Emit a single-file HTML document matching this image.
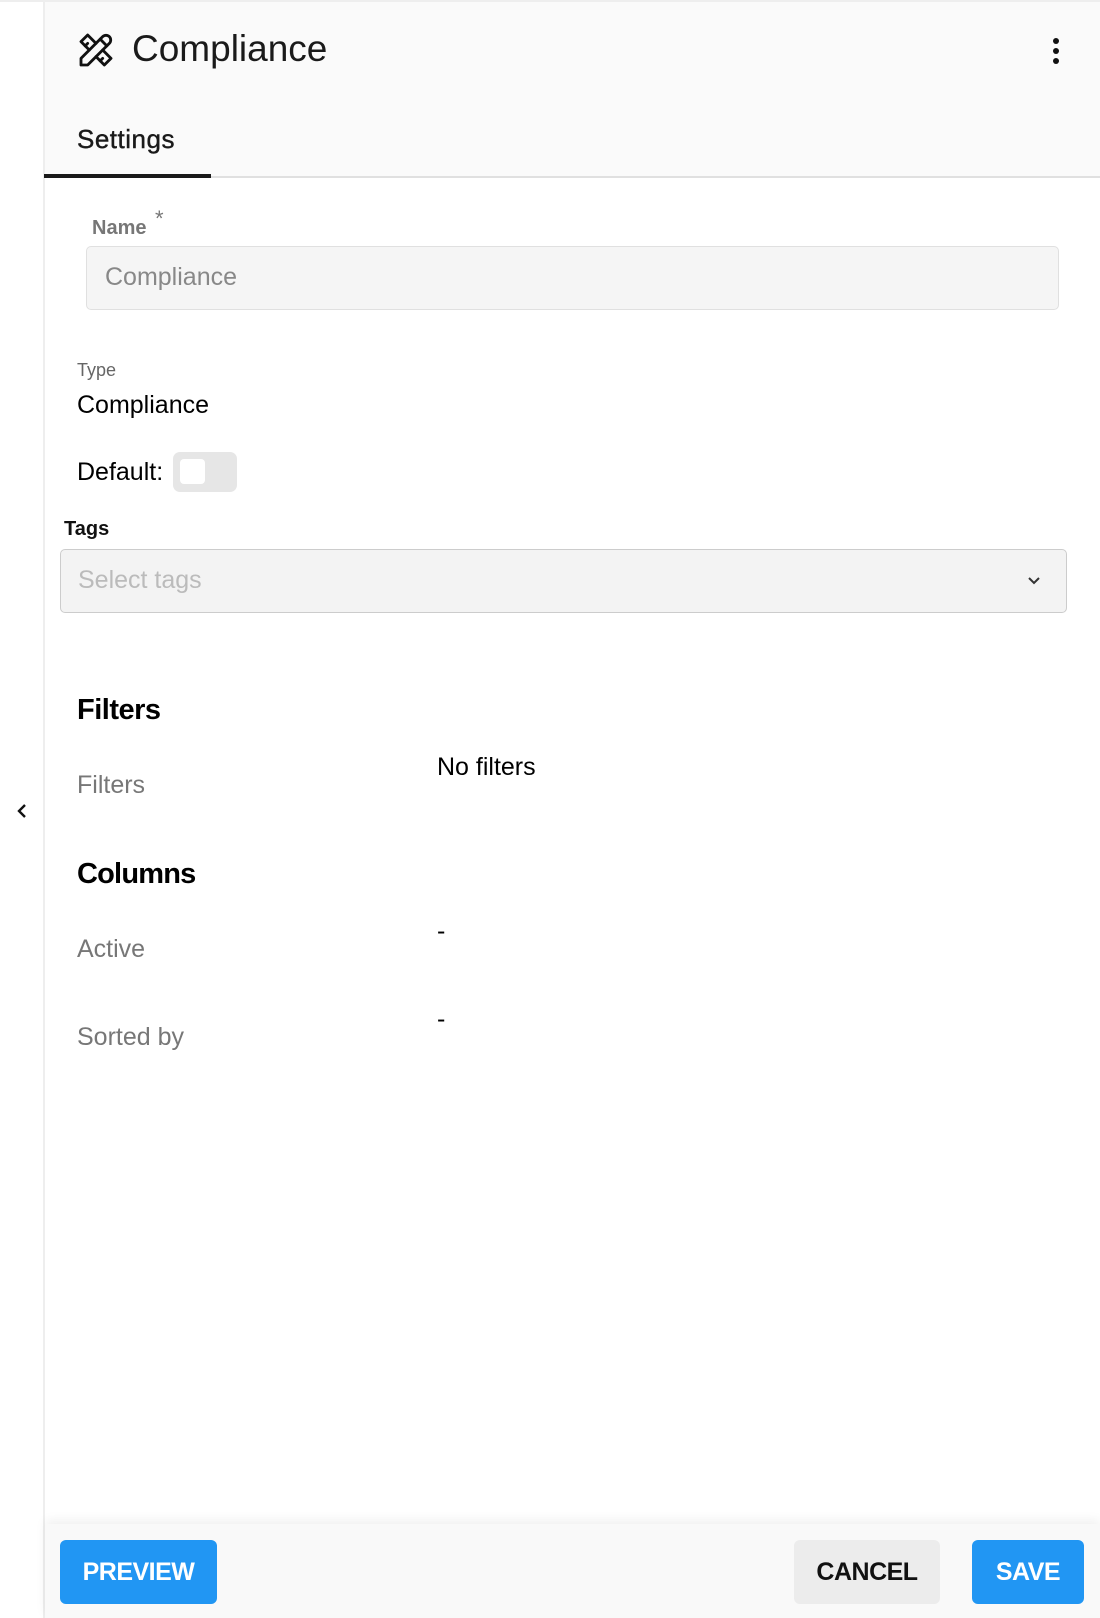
<!DOCTYPE html>
<html><head><meta charset="utf-8"><style>
*{box-sizing:border-box;margin:0;padding:0}
body{width:1100px;height:1618px;position:relative;background:#fff;font-family:"Liberation Sans",Arial,sans-serif;overflow:hidden}
.a{position:absolute;white-space:nowrap}
</style></head><body>
<div class="a" style="left:0;top:0;width:1100px;height:2px;background:#eee"></div>
<div class="a" style="left:43px;top:0;width:2px;height:1618px;background:#eee"></div>
<div class="a" style="left:45px;top:2px;width:1055px;height:176px;background:#fafafa"></div>
<svg class="a" style="left:76px;top:30px" width="40" height="40" viewBox="0 0 24 24" fill="none" stroke="#111" stroke-width="1.7" stroke-linejoin="round" stroke-linecap="round"><path d="M3 21h4l13 -13a1.5 1.5 0 0 0 -4 -4l-13 13v4"/><path d="M14.5 5.5l4 4"/><path d="M12 8l-5 -5l-4 4l5 5"/><path d="M7 8l-1.5 1.5"/><path d="M16 12l5 5l-4 4l-5 -5"/><path d="M16 17l-1.5 1.5"/></svg>
<div class="a" style="left:132px;top:28px;font-size:37px;color:#1a1a1a">Compliance</div>
<svg class="a" style="left:1050px;top:37px" width="12" height="30"><circle cx="6" cy="4" r="3" fill="#111"/><circle cx="6" cy="14" r="3" fill="#111"/><circle cx="6" cy="24" r="3" fill="#111"/></svg>
<div class="a" style="left:77px;top:124px;font-size:26px;color:#1a1a1a;-webkit-text-stroke:0.4px #1a1a1a;letter-spacing:0.5px">Settings</div>
<div class="a" style="left:45px;top:176px;width:1055px;height:2px;background:#e0e0e0"></div>
<div class="a" style="left:44px;top:174px;width:167px;height:4px;background:#1a1a1a"></div>
<div class="a" style="left:92px;top:217px;font-size:20px;font-weight:bold;color:#777">Name</div>
<div class="a" style="left:155px;top:206px;font-size:22px;color:#777">*</div>
<div class="a" style="left:86px;top:246px;width:973px;height:64px;background:#f5f5f5;border:1px solid #e0e0e0;border-radius:5px"></div>
<div class="a" style="left:105px;top:263px;font-size:25px;color:#888">Compliance</div>
<div class="a" style="left:77px;top:360px;font-size:18px;color:#666">Type</div>
<div class="a" style="left:77px;top:391px;font-size:25px;color:#000">Compliance</div>
<div class="a" style="left:77px;top:458px;font-size:25px;color:#000">Default:</div>
<div class="a" style="left:173px;top:452px;width:64px;height:40px;background:#e6e6e6;border-radius:7px"></div>
<div class="a" style="left:180px;top:459px;width:25px;height:25px;background:#fff;border-radius:4px"></div>
<div class="a" style="left:64px;top:518px;font-size:20px;font-weight:bold;color:#111">Tags</div>
<div class="a" style="left:60px;top:549px;width:1007px;height:64px;background:#f3f3f3;border:1px solid #ccc;border-radius:5px"></div>
<div class="a" style="left:78px;top:566px;font-size:25px;color:#bbb">Select tags</div>
<svg class="a" style="left:1026px;top:575px" width="16" height="12" viewBox="0 0 16 12"><path d="M3 3l5 5 5-5" fill="none" stroke="#333" stroke-width="2"/></svg>
<svg class="a" style="left:16px;top:802px" width="12" height="18" viewBox="0 0 12 18"><path d="M9 3L3 9l6 6" fill="none" stroke="#111" stroke-width="2.4"/></svg>
<div class="a" style="left:77px;top:694px;font-size:29px;font-weight:bold;color:#000;letter-spacing:-0.5px">Filters</div>
<div class="a" style="left:77px;top:771px;font-size:25px;color:#777">Filters</div>
<div class="a" style="left:437px;top:753px;font-size:25px;color:#000">No filters</div>
<div class="a" style="left:77px;top:858px;font-size:29px;font-weight:bold;color:#000;letter-spacing:-0.8px">Columns</div>
<div class="a" style="left:77px;top:935px;font-size:25px;color:#777">Active</div>
<div class="a" style="left:437px;top:917px;font-size:25px;color:#000">-</div>
<div class="a" style="left:77px;top:1023px;font-size:25px;color:#777">Sorted by</div>
<div class="a" style="left:437px;top:1005px;font-size:25px;color:#000">-</div>
<div class="a" style="left:45px;top:1524px;width:1055px;height:94px;background:#f9f9f9;box-shadow:0 -4px 10px rgba(0,0,0,0.06)"></div>
<div class="a" style="left:60px;top:1540px;width:157px;height:64px;background:#2196f3;border-radius:6px;color:#fff;font-size:25px;font-weight:bold;text-align:center;line-height:64px;letter-spacing:-0.5px">PREVIEW</div>
<div class="a" style="left:794px;top:1540px;width:146px;height:64px;background:#ececec;border-radius:6px;color:#111;font-size:25px;font-weight:bold;text-align:center;line-height:64px;letter-spacing:-0.5px">CANCEL</div>
<div class="a" style="left:972px;top:1540px;width:112px;height:64px;background:#2196f3;border-radius:6px;color:#fff;font-size:25px;font-weight:bold;text-align:center;line-height:64px;letter-spacing:-0.5px">SAVE</div>
</body></html>
